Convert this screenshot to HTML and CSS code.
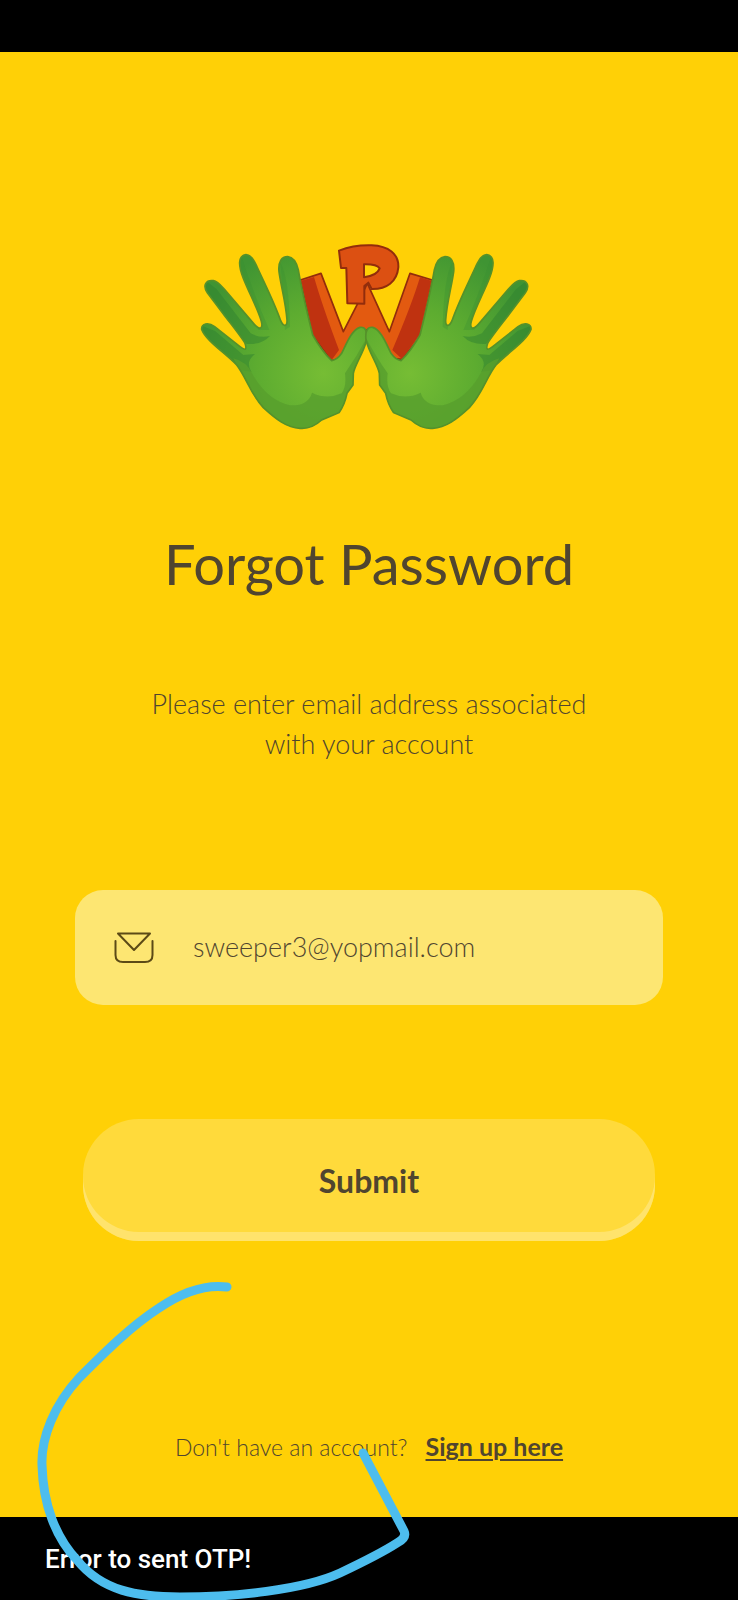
FILE: index.html
```html
<!DOCTYPE html>
<html lang="en">
<head>
<meta charset="utf-8">
<meta name="viewport" content="width=device-width, initial-scale=1">
<title>Forgot Password</title>
<link rel="stylesheet" href="styles.css">
</head>
<body>
<div class="screen">
  <div class="status-bar"></div>
  <main class="content">
    <svg class="logo" viewBox="0 0 1050 630" role="img" aria-label="Two hands logo">
      <defs>
        <radialGradient id="skin" gradientUnits="userSpaceOnUse" cx="400" cy="430" r="400">
          <stop offset="0" stop-color="#76bd34"/>
          <stop offset=".5" stop-color="#5dac30"/>
          <stop offset="1" stop-color="#3f9433"/>
        </radialGradient>
        <path id="hand-shape" d="M35 298C34 280 55 276 74 290L150 350C164 361 172 362 165 340C155 322 125 285 100 252L52 188C37 166 48 149 70 152C84 155 92 166 104 179L193 283C208 300 220 298 214 274C204 238 178 190 160 145C145 108 143 77 168 74C184 75 191 90 200 108C226 165 252 215 272 272C280 291 292 291 291 270C287 215 273 170 267 125C264 95 275 80 293 80C312 82 320 98 325 120C335 180 352 250 368 315C384 343 402 370 425 392C438 390 448 380 455 370C470 340 485 300 510 292C526 290 533 303 530 330C520 370 495 403 490 430L489 465L471 490C466 515 460 530 447 548L395 570C373 590 352 597 330 595C290 593 258 568 220 533C180 490 168 440 140 405C105 368 50 335 35 298Z"/>
        <clipPath id="hand-clip"><use href="#hand-shape"/></clipPath>
        <g id="hand">
          <use href="#hand-shape" fill="url(#skin)"/>
          <g clip-path="url(#hand-clip)">
            <path fill="#2f812f" opacity=".5" d="M30 285L75 303L160 375L195 372Q165 395 184 425L140 420L30 320ZM45 150L80 178L182 310Q210 325 240 318Q215 345 170 342L45 200Z"/>
            <path fill="#388f31" opacity=".3" d="M155 80Q190 190 238 300L205 300L140 100ZM272 100Q296 140 300 290L285 300Z"/>
            <path fill="#579f2d" opacity=".8" d="M130 385Q170 395 186 430Q230 510 300 526Q355 528 366 488Q410 510 455 490Q470 470 465 430Q500 380 532 320L550 350L500 600H240Z"/>
          </g>
          <use href="#hand-shape" class="hand-edge"/>
        </g>
      </defs>
      <path fill="#e35a10" stroke="#922d0c" stroke-width="5" stroke-linejoin="round" d="M331 150L393 130L460 305L506 215L532 160L598 305L660 130L727 150L691 320L636 388L610 386L550 310L530 300L510 310L450 386L425 392L368 315Z"/>
      <path fill="#bf3210" d="M334 152L372 141Q396 225 447 360L425 390L370 315ZM724 152L690 142Q665 225 607 360L636 387L689 315Z"/>
      <path fill="#dc5012" stroke="#922d0c" stroke-width="6" stroke-linejoin="round" fill-rule="evenodd" d="M447 62C480 49 515 45 545 46C595 48 627 72 625 112C621 155 590 178 545 177L535 158L523 168V221L472 220L469 114H453ZM522 103V142Q562 136 569 115Q560 102 522 103Z"/>
      <g><use href="#hand"/></g>
      <g transform="translate(1058) scale(-1 1)"><use href="#hand"/></g>
    </svg>
    <h1 class="title">Forgot Password</h1>
    <p class="intro">Please enter email address associated with your account</p>
    <form class="form">
      <label class="field">
        <svg class="mail-icon" viewBox="0 0 40 32" aria-hidden="true">
          <path d="M4 1.500H36L20 18ZM1.500 9V23Q1.500 30 9 30H31Q38.500 30 38.500 23V9"/>
        </svg>
        <input class="email" type="email" value="sweeper3@yopmail.com" aria-label="Email address">
      </label>
      <button class="submit" type="button">Submit</button>
    </form>
    <p class="signup"><span>Don't have an account?</span><a class="signup-link" href="#signup">Sign up here</a></p>
  </main>
  <div class="toast" role="status">Error to sent OTP!</div>
  <svg class="marker" viewBox="0 0 420 340" aria-hidden="true">
    <path d="M227 27C204 24 181 33 159 48C131 66 104 93 79 118C54 145 41 178 42 205C43 245 56 278 77 300C102 331 137 337 180 337C234 337 303 330 340 313Q380 294 397 283Q407 278 404 271L363 193"/>
  </svg>
</div>
</body>
</html>
```

FILE: styles.css
```css
* {
  box-sizing: border-box;
}

body {
  margin: 0;
  background: #ffd006;
  color: #50452f;
  font-family: Lato, "Open Sans", sans-serif;
}

.screen {
  position: relative;
  display: flex;
  flex-direction: column;
  min-height: 100vh;
  overflow: hidden;
}

.status-bar {
  height: 52px;
  background: #000;
}

.content {
  flex: 1;
  display: flex;
  flex-direction: column;
  align-items: center;
  padding: 178px 75px 50px;
}

.logo {
  width: 350px;
  height: 210px;
  margin-right: 8px;
}

.hand-edge {
  fill: none;
  stroke: #55912a;
  stroke-width: 5px;
}

.title {
  margin: 88px 0 0;
  font-size: 56px;
  line-height: 72px;
  font-weight: 400;
  text-align: center;
}

.intro {
  max-width: 460px;
  margin: 84px 0 0;
  font-size: 27px;
  line-height: 40px;
  font-weight: 300;
  text-align: center;
}

.form {
  display: flex;
  flex-direction: column;
  align-self: stretch;
  gap: 114px;
  margin-top: 126px;
}

.field {
  display: flex;
  align-items: center;
  gap: 39px;
  height: 115px;
  padding: 0 39px;
  border-radius: 28px;
  background: #fde672;
}

.mail-icon {
  flex: none;
  width: 40px;
  height: 32px;
  fill: none;
  stroke: #5c4a16;
  stroke-width: 2px;
  stroke-linejoin: round;
  stroke-linecap: round;
}

.email {
  flex: 1;
  min-width: 0;
  padding: 0 0 3px;
  border: 0;
  outline: 0;
  background: transparent;
  color: inherit;
  font-family: inherit;
  font-size: 27px;
  font-weight: 300;
}

.submit {
  height: 122px;
  margin: 0 8px;
  padding: 0;
  border: 0;
  border-radius: 56px;
  background: #ffda3b;
  box-shadow: inset 0 -9px 0 #ffe36c;
  color: inherit;
  font-family: inherit;
  font-size: 32px;
  font-weight: 700;
}

.signup {
  display: flex;
  align-items: baseline;
  gap: 18px;
  margin: auto 0 0;
  font-size: 23px;
  line-height: 40px;
  font-weight: 300;
}

.signup-link {
  color: inherit;
  font-size: 25px;
  font-weight: 700;
  text-underline-offset: 3px;
  text-decoration-thickness: 2px;
}

.toast {
  height: 83px;
  padding: 0 45px;
  background: #000;
  color: #fff;
  font-family: Roboto, sans-serif;
  font-size: 26px;
  font-weight: 500;
  line-height: 85px;
}

.marker {
  position: absolute;
  left: 0;
  bottom: 0;
  width: 420px;
  height: 340px;
  fill: none;
  stroke: #4dbdee;
  stroke-width: 9px;
  stroke-linecap: round;
  stroke-linejoin: round;
  pointer-events: none;
}
```
